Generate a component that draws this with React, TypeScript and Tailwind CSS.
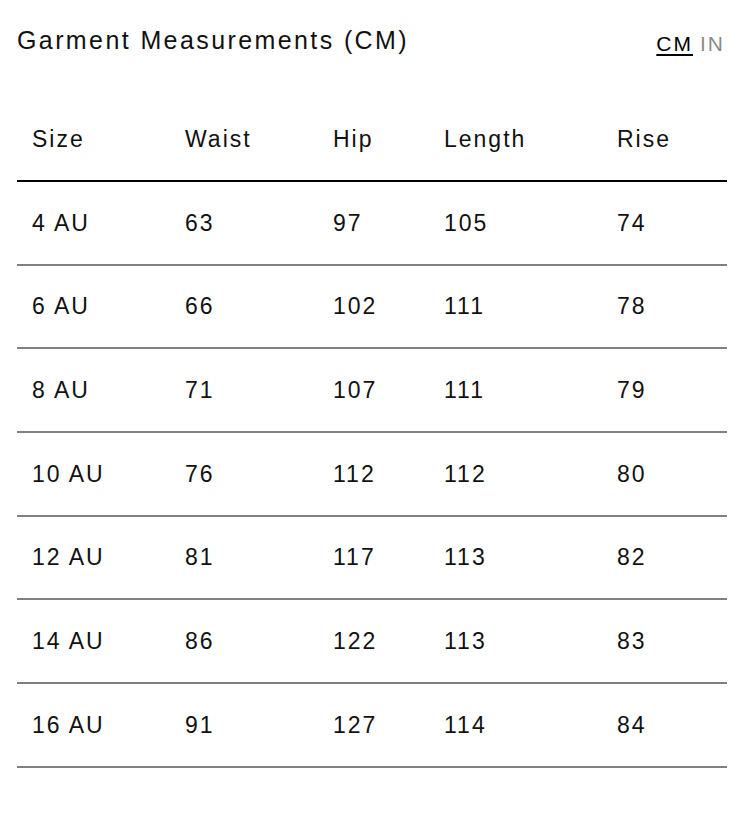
import React from "react";

const rows = [
  ["4 AU", "63", "97", "105", "74"],
  ["6 AU", "66", "102", "111", "78"],
  ["8 AU", "71", "107", "111", "79"],
  ["10 AU", "76", "112", "112", "80"],
  ["12 AU", "81", "117", "113", "82"],
  ["14 AU", "86", "122", "113", "83"],
  ["16 AU", "91", "127", "114", "84"],
];

const headers = ["Size", "Waist", "Hip", "Length", "Rise"];

export default function App() {
  return (
    <div
      className="w-[744px] h-[822px] bg-white px-[17px] text-[#111111]"
      style={{ fontFamily: '"Liberation Sans", Arial, sans-serif' }}
    >
      <div className="flex h-[98px] items-start justify-between pt-[25px]">
        <h2 className="text-[25px] leading-[30px] tracking-[2.4px] font-normal">
          Garment Measurements (CM)
        </h2>
        <div className="mt-[7px] flex gap-[7px] pr-[2px] text-[21px] leading-[24px] tracking-[2px]">
          <span className="underline decoration-2 underline-offset-[3px] text-black">CM</span>
          <span className="text-[#8a8a8a]">IN</span>
        </div>
      </div>
      <div className="text-[23px] tracking-[2px]">
        <div className="grid h-[84px] grid-cols-[153px_148px_111px_173px_1fr] items-center border-b-2 border-black">
          {headers.map((h) => (
            <div key={h} className="pl-[15px]">
              {h}
            </div>
          ))}
        </div>
        {rows.map((r) => (
          <div
            key={r[0]}
            className="grid h-[83.67px] grid-cols-[153px_148px_111px_173px_1fr] items-center border-b-2 border-[#808080]"
          >
            {r.map((c, i) => (
              <div key={i} className="pl-[15px]">
                {c}
              </div>
            ))}
          </div>
        ))}
      </div>
    </div>
  );
}
